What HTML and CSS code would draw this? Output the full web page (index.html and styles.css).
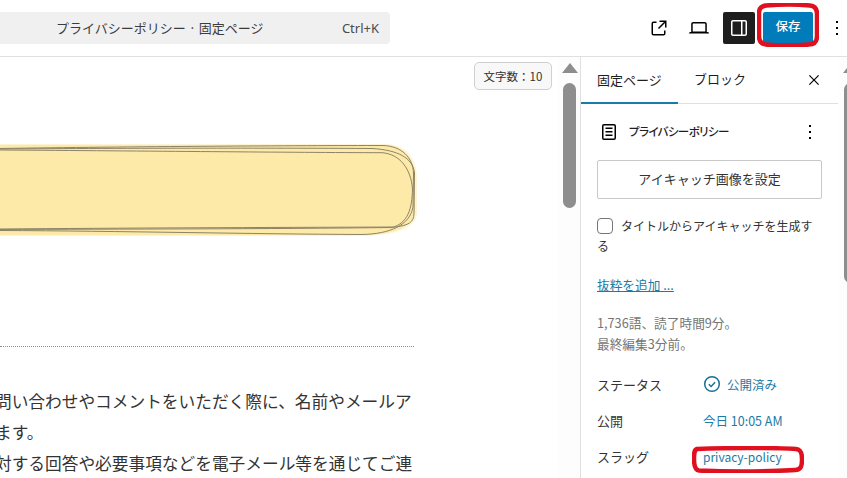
FILE: index.html
```html
<!DOCTYPE html>
<html lang="ja">
<head>
<meta charset="utf-8">
<title>プライバシーポリシー</title>
<link rel="stylesheet" href="styles.css">
</head>
<body>
<header class="topbar">
  <div class="search">
    <span class="search-title">プライバシーポリシー · 固定ページ</span>
    <span class="search-key">Ctrl+K</span>
  </div>
  <div class="tools">
    <button class="tool tool-view"><svg viewBox="0 0 24 24" width="24" height="24"><path d="M19.5 4.500h-7V6h4.440l-5.970 5.970 1.060 1.060L18 7.060v4.440h1.500v-7Zm-13 1a2 2 0 0 0-2 2v10a2 2 0 0 0 2 2h10a2 2 0 0 0 2-2v-3H17v3a.5.5 0 0 1-.5.5h-10a.5.5 0 0 1-.5-.5v-10a.5.5 0 0 1 .5-.5h3V5.500h-3Z"/></svg></button>
    <button class="tool tool-device"><svg viewBox="0 0 24 24" width="24" height="24"><path d="M20.500 16h-.7V8c0-1.100-.9-2-2-2H6.200c-1.100 0-2 .9-2 2v8h-.7c-.8 0-1.500.7-1.500 1.500h20c0-.8-.7-1.500-1.500-1.500zM5.700 8c0-.3.2-.5.5-.5h11.600c.3 0 .5.2.5.5v7.600H5.700V8z"/></svg></button>
    <button class="tool tool-panel"><svg viewBox="0 0 24 24" width="24" height="24"><path d="M18 4H6c-1.100 0-2 .9-2 2v12c0 1.100.9 2 2 2h12c1.100 0 2-.9 2-2V6c0-1.100-.9-2-2-2zm-4 14.500H6c-.3 0-.5-.2-.5-.5V6c0-.3.2-.5.5-.5h8v13zm4.500-.5c0 .3-.2.5-.5.5h-2.500v-13H18c.3 0 .5.2.5.5v12z"/></svg></button>
    <button class="save">保存</button>
    <button class="tool tool-more"><svg viewBox="0 0 24 24" width="24" height="24"><path d="M13 19h-2v-2h2v2zm0-6h-2v-2h2v2zm0-6h-2V5h2v2z"/></svg></button>
  </div>
  <svg class="mark mark-save" viewBox="0 0 62 44" width="62" height="44"><path d="M9 2.500C22 1.500 42 1.500 53 2.500C58 3 60 6 60 11V33C60 39 57 41.500 52 41.500C38 42.500 20 42.500 9 41.500C4 41 2 38 2 33V10C2 5 5 3 9 2.500Z"/></svg>
</header>

<div class="workspace">
  <main class="canvas">
    <div class="count">文字数：10</div>
    <svg class="note" viewBox="0 0 420 100" width="420" height="100">
      <path class="note-glow" d="M0 3H385C405 3 417 16 417 38V72C417 86 395 95 360 95H0Z"/>
      <path class="note-fill" d="M0 4H383C403 4 415 17 415 38V68C415 85 395 94 362 94H0Z"/>
      <path class="note-line" d="M0 7.500C130 5.500 300 4.500 383 4.500C402 5 413 17 413.500 32L413 66C410 84 390 93 362 93.500C250 93 120 90 0 89.500"/>
      <path class="note-line" d="M0 8C130 7 290 7 372 7.500C398 9 413 17 414.500 32L414 72C414 82 408 84 396 86C260 86.500 120 87 0 88"/>
      <path class="note-line" d="M0 9C150 10 290 11.500 382 11.700C400 13 411 28 412.500 48C412 68 408 82 392 86.500C270 88 120 88 0 88.500"/>
    </svg>
    <hr class="rule">
    <p class="copy">問い合わせやコメントをいただく際に、名前やメールア<br>ます。<br>対する回答や必要事項などを電子メール等を通じてご連</p>
    <div class="scroll scroll-main"><span class="scroll-up"></span><span class="scroll-thumb"></span></div>
  </main>

  <aside class="side">
    <nav class="tabs">
      <span class="tab tab-on">固定ページ</span>
      <span class="tab">ブロック</span>
      <svg class="tab-close" viewBox="0 0 24 24" width="18" height="18"><path d="M13.100 12l5.600-5.700-1.100-1.100-5.600 5.700-5.600-5.700-1.100 1.100 5.600 5.700-5.600 5.700 1.100 1.100 5.600-5.700 5.600 5.700 1.100-1.100z"/></svg>
    </nav>
    <div class="panel">
      <div class="page-head">
        <svg viewBox="0 0 24 24" width="24" height="24"><path fill-rule="evenodd" d="M15.500 7.500h-7V9h7V7.500Zm-7 3.500h7v1.500h-7V11Zm7 3.500h-7V16h7v-1.500ZM17 4H7a2 2 0 0 0-2 2v12a2 2 0 0 0 2 2h10a2 2 0 0 0 2-2V6a2 2 0 0 0-2-2Zm0 1.500H7a.5.5 0 0 0-.5.5v12a.5.5 0 0 0 .5.5h10a.5.5 0 0 0 .5-.5V6a.5.5 0 0 0-.5-.5Z"/></svg>
        <span class="page-name">プライバシーポリシー</span>
        <svg class="page-more" viewBox="0 0 24 24" width="24" height="24"><path d="M13 19h-2v-2h2v2zm0-6h-2v-2h2v2zm0-6h-2V5h2v2z"/></svg>
      </div>
      <button class="feature">アイキャッチ画像を設定</button>
      <label class="auto"><span class="box"></span>タイトルからアイキャッチを生成する</label>
      <a class="excerpt">抜粋を追加 ...</a>
      <p class="stats">1,736語、読了時間9分。<br>最終編集3分前。</p>
      <dl class="meta">
        <dt>ステータス</dt>
        <dd><svg viewBox="0 0 18 18" width="18" height="18"><circle cx="9" cy="9" r="7.300"/><path d="M5.800 9.300l2.300 2.200 4-4.300"/></svg>公開済み</dd>
        <dt>公開</dt>
        <dd>今日 10:05 AM</dd>
        <dt>スラッグ</dt>
        <dd class="slug">privacy-policy</dd>
      </dl>
    </div>
    <div class="scroll scroll-side"><span class="scroll-up"></span><span class="scroll-thumb"></span></div>
    <svg class="mark mark-slug" viewBox="0 0 112 27" width="112" height="27"><path d="M5 3C30 2 80 1.500 104 3C109 3.500 110 7 110 13C110 20 109 24 103 24C75 25.500 30 25.500 7 24.500C3 24 2 20 2 13C2 8 2 4 5 3Z"/></svg>
  </aside>
</div>
</body>
</html>
```

FILE: styles.css
```css
* { box-sizing: border-box; }
html, body { margin: 0; height: 100%; overflow: hidden; background: #fff; }
body {
  font-family: "Noto Sans CJK JP", "Noto Sans", sans-serif;
  color: #1e1e1e;
  display: flex;
  flex-direction: column;
  height: 478px;
}
button { font: inherit; border: 0; background: none; padding: 0; color: inherit; }
svg { display: block; flex: none; }

.topbar {
  position: relative;
  flex: none;
  height: 57px;
  display: flex;
  align-items: center;
  border-bottom: 1px solid #e0e0e0;
}
.search {
  width: 390px;
  height: 32px;
  background: #f0f0f0;
  border-radius: 0 4px 4px 0;
  display: flex;
  align-items: center;
  padding: 0 11px 0 56px;
  justify-content: space-between;
  font-size: 13px;
  color: #3c3c3c;
}
.search-title { position: relative; top: -1px; }
.search-key { font-family: "Noto Sans", sans-serif; font-size: 13px; color: #4a4a4a; }
.tools { margin-left: auto; display: flex; align-items: center; }
.tool { width: 32px; height: 32px; display: flex; align-items: center; justify-content: center; }
.tool-view { margin-right: 8px; }
.tool-device { margin-right: 8px; }
.tool-panel { background: #1e1e1e; fill: #fff; border-radius: 2px; margin-right: 8px; }
.tool-more { width: 20px; margin-left: 14px; }
.save {
  width: 50px;
  height: 32px;
  padding-bottom: 5px;
  background: #007cba;
  color: #fff;
  font-size: 12.500px;
  font-weight: 500;
  border-radius: 2px;
}
.mark { position: absolute; fill: none; stroke: #e0101f; stroke-width: 4.500; }
.mark-save { left: 757px; top: 3px; }
.mark-slug { left: 111px; top: 389px; }

.workspace { flex: 1; display: flex; min-height: 0; }
.canvas {
  position: relative;
  width: 580px;
  flex: none;
  padding-top: 84px;
  overflow: hidden;
}
.count {
  position: absolute;
  left: 474px;
  top: 5px;
  width: 78px;
  height: 28px;
  border: 1px solid #d0d0d0;
  border-radius: 5px;
  background: #f8f8f8;
  font-size: 11.500px;
  display: flex;
  align-items: center;
  justify-content: center;
  color: #333;
}
.note-glow { fill: #fef4d3; }
.note-fill { fill: #fde9a8; }
.note-line { fill: none; stroke: #8d8468; stroke-width: 1; }
.rule {
  width: 414px;
  margin: 105px 0 0;
  border: 0;
  border-top: 1px dotted #8f8f8f;
}
.copy {
  margin: 39px 0 0 -5px;
  font-size: 16.700px;
  line-height: 31px;
  white-space: nowrap;
  color: #333;
}
.scroll { position: absolute; top: 0; bottom: 0; overflow: hidden; }
.scroll-main { left: 558px; width: 22px; background: #fdfdfd; }
.scroll-side { left: 258px; width: 22px; background: #fdfdfd; }
.scroll-up {
  position: absolute;
  left: 4px;
  top: 6px;
  border-left: 8px solid transparent;
  border-right: 8px solid transparent;
  border-bottom: 10px solid #8e8e8e;
}
.scroll-thumb {
  position: absolute;
  left: 5px;
  top: 26px;
  width: 13px;
  height: 125px;
  border-radius: 7px;
  background: #8e8e8e;
}
.scroll-side .scroll-thumb { height: 200px; }

.side {
  position: relative;
  flex: 1;
  border-left: 1px solid #e0e0e0;
  overflow: hidden;
}
.tabs {
  width: 257px;
  height: 47px;
  display: flex;
  align-items: center;
  border-bottom: 1px solid #e0e0e0;
  position: relative;
  font-size: 13px;
}
.tab { height: 46px; line-height: 44px; padding: 0 16px; color: #1e1e1e; }
.tab-on { width: 97px; border-bottom: 2px solid #1a7ba6; margin-bottom: -1px; }
.tab-close { margin-left: auto; margin-right: 15px; }
.panel { width: 257px; padding: 0 16px; }
.page-head {
  height: 56px;
  display: flex;
  align-items: center;
  gap: 8px;
  font-size: 11.500px;
  font-weight: 500;
}
.page-name { font-feature-settings: "palt"; letter-spacing: -0.6px; position: relative; top: -1px; }
.page-more { margin-left: auto; }
.feature {
  display: block;
  width: 225px;
  height: 39px;
  padding-bottom: 3px;
  border: 1px solid #c8c8c8;
  border-radius: 2px;
  font-size: 13px;
  color: #333;
}
.auto {
  display: block;
  margin-top: 17px;
  font-size: 12px;
  line-height: 20px;
  color: #333;
}
.box {
  display: inline-block;
  vertical-align: -3px;
  width: 16px;
  height: 16px;
  border: 1px solid #757575;
  border-radius: 4px;
  margin-right: 8px;
}
.excerpt {
  display: block;
  margin-top: 19px;
  font-size: 12.700px;
  line-height: 20px;
  color: #1a7ba6;
  text-decoration: underline;
}
.stats {
  margin: 17px 0 0;
  font-size: 12.700px;
  line-height: 21px;
  color: #757575;
}
.meta {
  margin: 12px 0 0;
  display: grid;
  grid-template-columns: 106px 1fr;
  grid-auto-rows: 36px;
  align-items: center;
  font-size: 13px;
}
.meta dt { color: #333; }
.meta dd {
  margin: 0;
  display: flex;
  align-items: center;
  gap: 6px;
  font-size: 12.500px;
  color: #1a7ba6;
}
.meta .slug { font-size: 12px; }
.meta dd svg { fill: none; stroke: #1a6f96; stroke-width: 1.500; }
```
